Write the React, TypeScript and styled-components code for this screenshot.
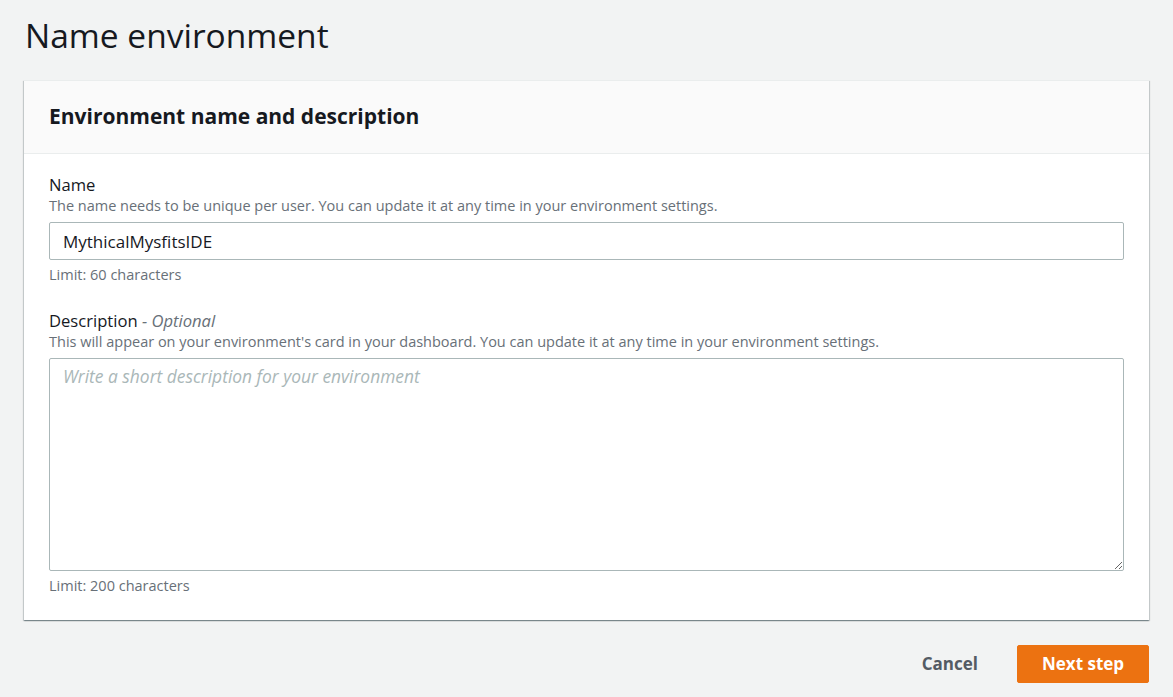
import React from "react";
import styled, { createGlobalStyle } from "styled-components";

const Global = createGlobalStyle`
  html, body { margin: 0; padding: 0; background: #f2f3f3; }
  body { font-family: "Open Sans", "Noto Sans", sans-serif; color: #16191f; }
  * { box-sizing: border-box; }
`;

const Page = styled.div`
  padding: 14px 24px 0 24px;
  width: 1173px;
  height: 697px;
  overflow: hidden;
`;

const Title = styled.h1`
  margin: 0 0 24px 1px;
  font-size: 33.5px;
  font-weight: 400;
  line-height: 42px;
  color: #16191f;
`;

const Card = styled.section`
  width: 1125px;
  background: #fff;
  border-top: 1px solid #eaeded;
  box-shadow: 0 1px 1px 0 rgba(0, 28, 36, 0.3), 1px 1px 1px 0 rgba(0, 28, 36, 0.15),
    -1px 1px 1px 0 rgba(0, 28, 36, 0.15);
`;

const CardHeader = styled.header`
  background: #fafafa;
  border-bottom: 1px solid #eaeded;
  height: 73px;
  display: flex;
  align-items: center;
  padding: 0 25px 2px 25px;
`;

const CardTitle = styled.h2`
  margin: 0;
  font-size: 21px;
  font-weight: 700;
  color: #16191f;
`;

const CardBody = styled.div`
  padding: 20px 25px 25px 25px;
  display: flex;
  flex-direction: column;
  gap: 26px;
`;

const Field = styled.div`
  display: flex;
  flex-direction: column;
`;

const Label = styled.label`
  font-size: 16.6px;
  line-height: 22px;
  color: #16191f;
`;

const Optional = styled.span`
  color: #687078;
  font-style: italic;
`;

const Hint = styled.div`
  font-size: 14.5px;
  line-height: 18px;
  color: #687078;
  margin: 1px 0 7px 0;
`;

const Constraint = styled.div`
  font-size: 14.5px;
  line-height: 18px;
  color: #687078;
  margin-top: 6px;
`;

const Input = styled.input`
  width: 1075px;
  height: 38px;
  border: 1px solid #aab7b8;
  border-radius: 2px;
  padding: 0 13px;
  font-family: inherit;
  font-size: 17px;
  color: #16191f;
  background: #fff;
  outline: none;
`;

const TextArea = styled.textarea`
  width: 1075px;
  height: 213px;
  border: 1px solid #aab7b8;
  border-radius: 2px;
  padding: 5px 13px;
  font-family: inherit;
  font-size: 17.4px;
  line-height: 24px;
  color: #16191f;
  background: #fff;
  outline: none;
  resize: vertical;
  display: block;
  &::placeholder {
    color: #aab7b8;
    font-style: italic;
  }
`;

const Actions = styled.div`
  width: 1125px;
  display: flex;
  justify-content: flex-end;
  align-items: center;
  gap: 19px;
  margin-top: 24px;
`;

const LinkButton = styled.button`
  border: none;
  background: transparent;
  font-family: inherit;
  font-size: 17px;
  font-weight: 700;
  color: #545b64;
  padding: 8px 20px;
  cursor: pointer;
`;

const PrimaryButton = styled.button`
  border: 1px solid #ec7211;
  background: #ec7211;
  color: #fff;
  font-family: inherit;
  font-size: 17px;
  font-weight: 700;
  border-radius: 2px;
  height: 38px;
  width: 132px;
  padding: 0;
  cursor: pointer;
`;

export default function App() {
  return (
    <Page>
      <Global />
      <Title>Name environment</Title>
      <Card>
        <CardHeader>
          <CardTitle>Environment name and description</CardTitle>
        </CardHeader>
        <CardBody>
          <Field>
            <Label>Name</Label>
            <Hint>The name needs to be unique per user. You can update it at any time in your environment settings.</Hint>
            <Input defaultValue="MythicalMysfitsIDE" />
            <Constraint>Limit: 60 characters</Constraint>
          </Field>
          <Field>
            <Label>
              Description <Optional>- Optional</Optional>
            </Label>
            <Hint>
              This will appear on your environment's card in your dashboard. You can update it at any time in your environment settings.
            </Hint>
            <TextArea placeholder="Write a short description for your environment" />
            <Constraint>Limit: 200 characters</Constraint>
          </Field>
        </CardBody>
      </Card>
      <Actions>
        <LinkButton>Cancel</LinkButton>
        <PrimaryButton>Next step</PrimaryButton>
      </Actions>
    </Page>
  );
}
